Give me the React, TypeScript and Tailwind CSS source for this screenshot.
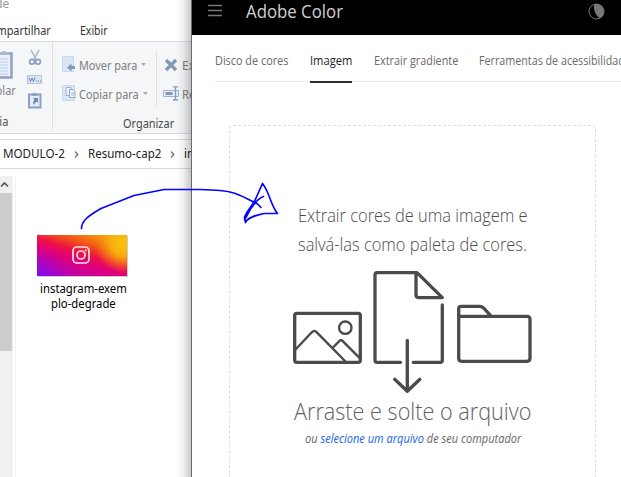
import { useLayoutEffect, useRef, useState } from 'react';
import type { ReactNode } from 'react';

/* A single line of text condensed or expanded to an exact width. */
function Fit({ width, className = '', children }: { width: number; className?: string; children: ReactNode }) {
  const ref = useRef<HTMLSpanElement>(null);
  const [scale, setScale] = useState(1);
  useLayoutEffect(() => {
    if (ref.current) setScale(width / ref.current.offsetWidth);
  }, [width]);
  return (
    <span className={`block shrink-0 whitespace-nowrap ${className}`} style={{ width }}>
      <span ref={ref} className="inline-block origin-left" style={{ transform: `scaleX(${scale})` }}>
        {children}
      </span>
    </span>
  );
}

function PasteIcon() {
  return (
    <svg width="14" height="30" viewBox="0 0 14 30" className="block">
      <path d="M-6 4.500H11.500V28.500H-6" fill="#e9f0fa" stroke="#8ca0c2" strokeWidth="2.500" />
      <path d="M0 6V3h2a2.500 2.500 0 0 1 4 0h3v3z" fill="#a9b8d0" />
      <path d="M0 10h8M0 13h8M0 16h8M0 19h8M0 22h8M0 25h8" stroke="#b9cbe8" />
    </svg>
  );
}

function ScissorsIcon() {
  return (
    <svg width="14" height="17" viewBox="0 0 14 17" className="block" fill="none" stroke="#8b9fc0">
      <path d="M3 1l5.500 10M11 1L5.500 11" stroke="#a5b2c8" strokeWidth="1.500" />
      <circle cx="4" cy="12.800" r="2.400" strokeWidth="1.700" />
      <circle cx="10" cy="12.800" r="2.400" strokeWidth="1.700" />
    </svg>
  );
}

function CopyPathIcon() {
  return (
    <svg width="15" height="9" viewBox="0 0 15 9" className="block">
      <rect x=".5" y=".5" width="14" height="8" fill="#dce6f4" stroke="#b5c5de" />
      <path d="M2 2.500l1.500 4L5 3l1.500 3.500L8 2.500M9 6h1M11 6h1M13 6h1" fill="none" stroke="#7084a8" />
    </svg>
  );
}

function ShortcutIcon() {
  return (
    <svg width="14" height="17" viewBox="0 0 14 17" className="block">
      <rect x="1" y="2.500" width="11.500" height="13" fill="#e3ebf6" stroke="#8ca0c2" strokeWidth="2" />
      <path d="M4 3V1.500h1.500a1.500 1.500 0 0 1 2.500 0H9.500V4H4z" fill="#8ca0c2" />
      <path d="M5 6h5v5L8.500 9.500Q6.500 11 6 13 4 10 6.500 7.700z" fill="#6f86b0" />
    </svg>
  );
}

function MoveIcon() {
  return (
    <svg width="14" height="17" viewBox="0 0 14 17" className="block">
      <path d="M.5 .5h11v15H.5z" fill="#dce7f5" stroke="#ccd9ea" />
      <path d="M5 11.500L9.500 7.500V10H13v3H9.500v2.500z" fill="#8297bd" />
    </svg>
  );
}

function CopyIcon() {
  return (
    <svg width="14" height="17" viewBox="0 0 14 17" className="block">
      <path d="M.5 .5h12v15H.5z" fill="#dce7f5" stroke="#ccd9ea" />
      <path d="M4 2.500h5v8H4z" fill="#eef3fa" stroke="#9fb2d0" />
      <path d="M7.500 4.500h3.500l2 2v6H7.500z" fill="#f3f7fc" stroke="#8fa4c6" />
      <path d="M9 8h3M9 10h3" stroke="#a6b8d3" />
    </svg>
  );
}

function RenameIcon() {
  return (
    <svg width="17" height="15" viewBox="0 0 17 15" className="block">
      <path d="M.5 4.500h15v6H.5z" fill="#e8eff8" stroke="#9fb2d0" />
      <path d="M2.500 6h7v3h-7z" fill="#8195b9" />
      <path d="M10 .8h5M10 14h5M12.500 1v13" stroke="#8799b8" strokeWidth="1.300" />
    </svg>
  );
}

function Caret() {
  return <svg width="5" height="3" viewBox="0 0 5 3" className="ml-[4px] block"><path d="M0 0h5L2.500 3z" fill="#a9acb1" /></svg>;
}

function Chevron() {
  return <svg width="5" height="7" viewBox="0 0 5 7" className="block"><path d="M1 .5l2.800 3L1 6.500" fill="none" stroke="#777" strokeWidth="1.400" /></svg>;
}

function Ribbon() {
  return (
    <div className="flex h-[92px] border-b border-[#d9dadb] bg-[#f4f6f8] text-[12px] leading-[16px] text-[#808080]">
      <div className="flex h-[88px] w-[53px] shrink-0 flex-col border-r border-[#dfe1e3]">
        <div className="flex h-[74px]">
          <div className="w-[27px] pt-[7px]">
            <PasteIcon />
            <div className="mt-[4px] flex w-[16px] justify-end"><Fit width={27}>Colar</Fit></div>
          </div>
          <div className="flex flex-col items-center pt-[7px]">
            <ScissorsIcon />
            <div className="mt-[9px]"><CopyPathIcon /></div>
            <div className="mt-[8px]"><ShortcutIcon /></div>
          </div>
        </div>
        <div className="flex w-[8px] justify-end text-[#555]"><Fit width={112}>Área de Transferência</Fit></div>
      </div>
      <div className="w-[138px] shrink-0">
        <div className="flex h-[74px]">
          <div className="w-[103px] shrink-0 pl-[9px] pt-[14px]">
            <div className="flex h-[17px] items-center"><MoveIcon /><Fit width={58} className="ml-[3px] mt-[2px]">Mover para</Fit><Caret /></div>
            <div className="mt-[12px] flex h-[17px] items-center"><CopyIcon /><Fit width={60} className="ml-[3px] mt-[2px]">Copiar para</Fit><Caret /></div>
          </div>
          <div className="mt-[9px] h-[56px] w-px shrink-0 bg-[#dfe1e3]" />
          <div className="shrink-0 pt-[14px]">
            <div className="flex h-[17px] items-center pl-[7px]">
              <svg width="14" height="14" viewBox="0 0 14 14" className="block"><path d="M2 2l10 10M12 2L2 12" stroke="#8497b7" strokeWidth="3.200" /></svg>
              <Fit width={37} className="ml-[4px] mt-[2px]">Excluir</Fit>
            </div>
            <div className="mt-[12px] flex h-[17px] items-center pl-[6px]"><RenameIcon /><Fit width={55} className="ml-[2px] mt-[2px]">Renomear</Fit></div>
          </div>
        </div>
        <Fit width={51} className="ml-[70px] text-[#484848]">Organizar</Fit>
      </div>
    </div>
  );
}

function Thumbnail() {
  return (
    <svg width="91" height="42" viewBox="0 0 91 42" className="block">
      <defs>
        <linearGradient id="sunset" gradientUnits="userSpaceOnUse" x1="0" y1="41" x2="21" y2="-22.600">
          <stop offset="0" stopColor="#9a08d8" />
          <stop offset=".25" stopColor="#c8029c" />
          <stop offset=".43" stopColor="#e40074" />
          <stop offset=".54" stopColor="#ee1244" />
          <stop offset=".7" stopColor="#f25a14" />
          <stop offset=".88" stopColor="#f59a0c" />
        </linearGradient>
        <radialGradient id="violet" gradientUnits="userSpaceOnUse" cx="0" cy="44" r="32">
          <stop offset="0" stopColor="#7610f0" />
          <stop offset="1" stopColor="#a800cc" stopOpacity="0" />
        </radialGradient>
        <radialGradient id="yellow" gradientUnits="userSpaceOnUse" cx="86" cy="10" r="28">
          <stop offset="0" stopColor="#f9c40b" />
          <stop offset=".4" stopColor="#f9bd0b" stopOpacity=".8" />
          <stop offset="1" stopColor="#f59a0c" stopOpacity="0" />
        </radialGradient>
      </defs>
      <path d="M1 1h90v41H1z" fill="#ccc" />
      <path d="M0 0h90v41H0z" fill="url(#sunset)" />
      <path d="M0 0h90v41H0z" fill="url(#violet)" />
      <path d="M0 0h90v41H0z" fill="url(#yellow)" />
      <g fill="none" stroke="#ffe0ea" strokeWidth="1.700">
        <rect x="36" y="12" width="16" height="16" rx="4" />
        <circle cx="44" cy="20" r="4" />
      </g>
      <circle cx="48.800" cy="15.200" r="1" fill="#ffe0ea" />
    </svg>
  );
}

function Explorer() {
  return (
    <section className="relative flex h-full w-[191px] shrink-0 flex-col overflow-hidden bg-white font-['Noto_Sans','Open_Sans',sans-serif]">
      <div className="flex h-[20px] w-[9px] shrink-0 justify-end text-[12px] leading-[16px] text-[#999]"><Fit width={28} className="-mt-[4px]">Rede</Fit></div>
      <div className="flex h-[22px] shrink-0 border-b border-[#dcdcdc] text-[12px] leading-[22px] text-[#333]">
        <div className="flex w-[51px] justify-end"><Fit width={68}>Compartilhar</Fit></div>
        <Fit width={28} className="ml-[29px]">Exibir</Fit>
      </div>
      <Ribbon />
      <div className="mt-[5px] flex h-[30px] shrink-0 items-center border-y border-[#d9d9d9] pl-[3px] text-[12px] text-[#222]">
        <Fit width={62}>MODULO-2</Fit>
        <div className="ml-[9px]"><Chevron /></div>
        <Fit width={73} className="ml-[9px]">Resumo-cap2</Fit>
        <div className="ml-[9px]"><Chevron /></div>
        <Fit width={46} className="ml-[9px]">imagens</Fit>
      </div>
      <div className="flex min-h-0 flex-1 pt-[7px]">
        <div className="w-[13px] shrink-0 bg-[#f0f0f0]">
          <div className="flex h-[17px] items-center">
            <svg width="9" height="7" viewBox="0 0 9 7" className="block"><path d="M1 5.500l3.500-3.500L8 5.500" fill="none" stroke="#555" strokeWidth="1.700" /></svg>
          </div>
          <div className="h-[158px] w-[12px] bg-[#cdcdcd]" />
        </div>
        <div className="ml-[2px] w-px shrink-0 bg-[#f2f2f2]" />
        <div className="ml-[21px] flex w-[91px] shrink-0 flex-col items-center pt-[59px] text-[12px] leading-[15px] text-black">
          <Thumbnail />
          <Fit width={87} className="ml-[2px] mt-[4px]">instagram-exem</Fit>
          <Fit width={65} className="ml-[2px]">plo-degrade</Fit>
        </div>
      </div>
      <div className="absolute inset-y-0 right-0 w-[15px] bg-linear-to-r from-transparent via-black/6 to-black/22" />
    </section>
  );
}

function UploadArt() {
  return (
    <svg width="239" height="124" viewBox="0 0 239 124" className="block" fill="none" stroke="#4b4b4b" strokeLinecap="round" strokeLinejoin="round">
      <g strokeWidth="3.300">
        <rect x="1.700" y="42.300" width="65.600" height="49" rx="2" />
        <path d="M107.500 91.300H84q-2 0-2-2V3.700q0-2 2-2h40l25.300 25H126q-3 0-3-3V1.700M149.300 34v55.300q0 2-2 2h-27" />
        <path d="M114.300 69.300v50.700M101.700 108.300l12.600 12 12.600-12" />
        <path d="M165.700 45.300V37.800q0-2.500 2.500-2.500h18.500q2 0 3.500 1.400l7.500 8M165.700 45.300H234q3 0 3 3V87.300q0 3-3 3h-65.300q-3 0-3-3z" />
      </g>
      <g strokeWidth="2.400">
        <circle cx="52.300" cy="56.700" r="6.200" />
        <path d="M3 78l15.800-16.700q2.500-2.500 5 0L52.500 90.500M40 76.500l6-6.200q2-2 4 0L66.500 86.800" />
      </g>
    </svg>
  );
}

function AdobeColor() {
  return (
    <main className="flex h-full min-w-0 flex-1 flex-col overflow-hidden border-l border-[#6b6b6b] bg-white font-['Open_Sans','Noto_Sans',sans-serif]">
      <header className="flex h-[35px] shrink-0 bg-black text-[#d0d0d0]">
        <svg width="14" height="13" viewBox="0 0 14 13" className="ml-[16px] mt-[4px] block"><path d="M0 1.500h14M0 6.500h14M0 11.500h14" stroke="#777" strokeWidth="1.600" /></svg>
        <Fit width={97} className="ml-[24px] text-[17.500px] leading-[22px]">Adobe Color</Fit>
        <svg width="17" height="17" viewBox="0 0 17 17" className="ml-[245px] mt-[3px] block">
          <circle cx="8.500" cy="8.500" r="7.500" fill="none" stroke="#777" />
          <path d="M6 1.300Q7 .8 8.500 1a7.500 7.500 0 0 1 3.200 14.200Q5 10.500 6 1.300z" fill="#777" />
        </svg>
      </header>
      <nav className="ml-[23px] flex h-[47px] shrink-0 border-b border-[#eaeaea] pt-[17px] text-[12.500px] leading-[18px] text-[#6a6a6a]">
        <Fit width={73}>Disco de cores</Fit>
        <div className="ml-[22px] h-[31px] shrink-0 border-b-2 border-[#2c2c2c] text-[#222]"><Fit width={42}>Imagem</Fit></div>
        <Fit width={84} className="ml-[22px]">Extrair gradiente</Fit>
        <Fit width={152} className="ml-[21px]">Ferramentas de acessibilidade</Fit>
      </nav>
      <section className="ml-[37px] mt-[43px] flex h-[400px] w-[367px] shrink-0 flex-col items-center rounded-[4px] border border-dashed border-[#dedede] pt-[75px]">
        <div className="text-[17.500px] font-light leading-[29px] text-[#4b4b4b]">
          <Fit width={230}>Extrair cores de uma imagem e</Fit>
          <Fit width={229}>salvá-las como paleta de cores.</Fit>
        </div>
        <div className="mt-[12px]"><UploadArt /></div>
        <Fit width={237} className="text-[23px] font-light leading-[32px] text-[#606060]">Arraste e solte o arquivo</Fit>
        <Fit width={216} className="mt-[3px] text-[12px] italic leading-[18px] text-[#666]">
          ou <span className="text-[#1763e5]">selecione um arquivo</span> de seu computador
        </Fit>
      </section>
    </main>
  );
}

function HandDrawnArrow() {
  return (
    <svg width="200" height="56" viewBox="80 180 200 56" className="pointer-events-none absolute left-[80px] top-[180px]" fill="none" stroke="#0505ff" strokeWidth="1.700" strokeLinecap="round" strokeLinejoin="round">
      <path d="M81.500 228.500C81.500 221 88 216 101 208.500L134 195.500 164 189.500H200Q224 190 232 192.500C242 195 250 201 257 203.500L261 207.500" />
      <path d="M263.500 196.500C258 198 255 203 252 207C248 212 245 216 244.500 220L254 202.500 262.500 183.500C269 191 271 206 277.500 213.500H264C257 215 248 217 245.500 222.500L244.500 217C248 209 252 206 254.500 201" />
    </svg>
  );
}

export default function App() {
  return (
    <div className="relative flex h-[477px] w-[621px] overflow-hidden bg-white">
      <Explorer />
      <AdobeColor />
      <HandDrawnArrow />
    </div>
  );
}
